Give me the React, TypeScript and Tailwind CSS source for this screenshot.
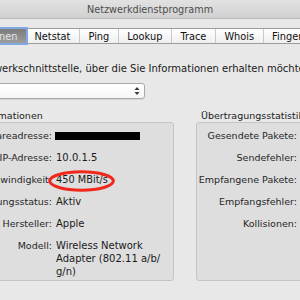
const App = () => {
  return (
    <div className="w-[300px] h-[300px] overflow-hidden bg-[#e8e8e8] font-['DejaVu_Sans',sans-serif] text-[9.5px] leading-[13px] text-[#1a1a1a]">
      {/* window, wider than the crop */}
      <div className="w-[580px] -ml-[140px] flex flex-col">
        {/* title bar */}
        <div className="h-[19px] bg-gradient-to-b from-[#e2e2e2] to-[#d0d0d0] border-b border-[#b8b8b8] flex items-center justify-center text-[9.7px] text-[#4d4d4d]">
          Netzwerkdienstprogramm
        </div>

        {/* tabs */}
        <div className="mt-[9px] ml-[79px] self-start flex h-[16px] border border-[#9c9c9c] rounded-[4px] bg-gradient-to-b from-[#ffffff] to-[#efefef] text-[9.8px] text-[#111]">
          <div className="px-[8.5px] flex items-center bg-gradient-to-b from-[#7c7c7c] to-[#9c9c9c] text-[#e6e6e6] rounded-l-[4px] ring-2 ring-[#7fa8e4]">
            Informationen
          </div>
          <div className="px-[8.5px] flex items-center">Netstat</div>
          <div className="px-[8.5px] flex items-center border-l border-[#c8c8c8]">Ping</div>
          <div className="px-[8.5px] flex items-center border-l border-[#c8c8c8]">Lookup</div>
          <div className="px-[8.5px] flex items-center border-l border-[#c8c8c8]">Trace</div>
          <div className="px-[8.5px] flex items-center border-l border-[#c8c8c8]">Whois</div>
          <div className="px-[8.5px] flex items-center border-l border-[#c8c8c8]">Finger</div>
          <div className="px-[8.5px] flex items-center border-l border-[#c8c8c8]">Port Scan</div>
        </div>

        <div className="mt-[18px] pl-[34px] whitespace-nowrap text-[10px]">
          Wählen Sie die Netzwerkschnittstelle, über die Sie Informationen erhalten möchten.
        </div>

        {/* interface popup */}
        <div className="mt-[8px] ml-[36px] w-[249px] h-[16px] bg-gradient-to-b from-[#ffffff] to-[#f6f6f6] border border-[#a9a9a9] rounded-[3px] flex items-center justify-between pl-[8px] pr-[4px] shadow-[0_1px_0_rgba(0,0,0,0.08)]">
          <span>WLAN (en1)</span>
          <svg width="6" height="10" viewBox="0 0 6 10">
            <path d="M3 1 L5.5 4 L0.5 4 Z" fill="#3a3a3a" />
            <path d="M3 9 L5.5 6 L0.5 6 Z" fill="#3a3a3a" />
          </svg>
        </div>

        {/* group boxes */}
        <div className="mt-[10px] px-[46px] flex gap-[22px]">
          <div className="w-[268px] flex flex-col">
            <div className="pl-[5px] text-[#222]">Schnittstelleninformationen</div>
            <div className="h-[159px] border border-[#c4c4c4] rounded-[3px] bg-[#dedede] pt-[6px] grid grid-cols-[145px_1fr] gap-x-[4px] gap-y-[9px] content-start">
              <div className="text-right text-[#262626] whitespace-nowrap">Hardwareadresse:</div>
              <div className="flex items-center">
                <div className="w-[85px] h-[8px] bg-black -ml-[1px]" />
              </div>
              <div className="text-right text-[#262626] whitespace-nowrap">IP-Adresse:</div>
              <div className="text-[10px]">10.0.1.5</div>
              <div className="text-right text-[#262626] whitespace-nowrap">Verbindungsgeschwindigkeit:</div>
              <div className="relative text-[9.8px] whitespace-nowrap">
                450 MBit/s
                <svg className="absolute -left-[8px] -top-[3px]" width="67" height="22" viewBox="0 0 67 22">
                  <ellipse cx="33.5" cy="11" rx="31.8" ry="9.2" fill="none" stroke="#f0281c" strokeWidth="3" />
                </svg>
              </div>
              <div className="text-right text-[#262626] whitespace-nowrap">Verbindungsstatus:</div>
              <div className="text-[10px]">Aktiv</div>
              <div className="text-right text-[#262626] whitespace-nowrap">Hersteller:</div>
              <div className="text-[10px]">Apple</div>
              <div className="text-right text-[#262626] whitespace-nowrap">Modell:</div>
              <div className="whitespace-nowrap text-[10px]">
                Wireless Network
                <br />
                Adapter (802.11 a/b/
                <br />
                g/n)
              </div>
            </div>
          </div>

          <div className="flex-1 flex flex-col">
            <div className="pl-[5px] text-[#222] whitespace-nowrap">Übertragungsstatistik</div>
            <div className="h-[159px] border border-[#c4c4c4] rounded-[3px] bg-[#dedede] pt-[6px] grid grid-cols-[100px_1fr] gap-x-[4px] gap-y-[9px] content-start">
              <div className="justify-self-end text-[#262626] whitespace-nowrap">Gesendete Pakete:</div>
              <div>0</div>
              <div className="justify-self-end text-[#262626] whitespace-nowrap">Sendefehler:</div>
              <div>0</div>
              <div className="justify-self-end text-[#262626] whitespace-nowrap">Empfangene Pakete:</div>
              <div>0</div>
              <div className="justify-self-end text-[#262626] whitespace-nowrap">Empfangsfehler:</div>
              <div>0</div>
              <div className="justify-self-end text-[#262626] whitespace-nowrap">Kollisionen:</div>
              <div>0</div>
            </div>
          </div>
        </div>
      </div>
    </div>
  );
};

export default App;
